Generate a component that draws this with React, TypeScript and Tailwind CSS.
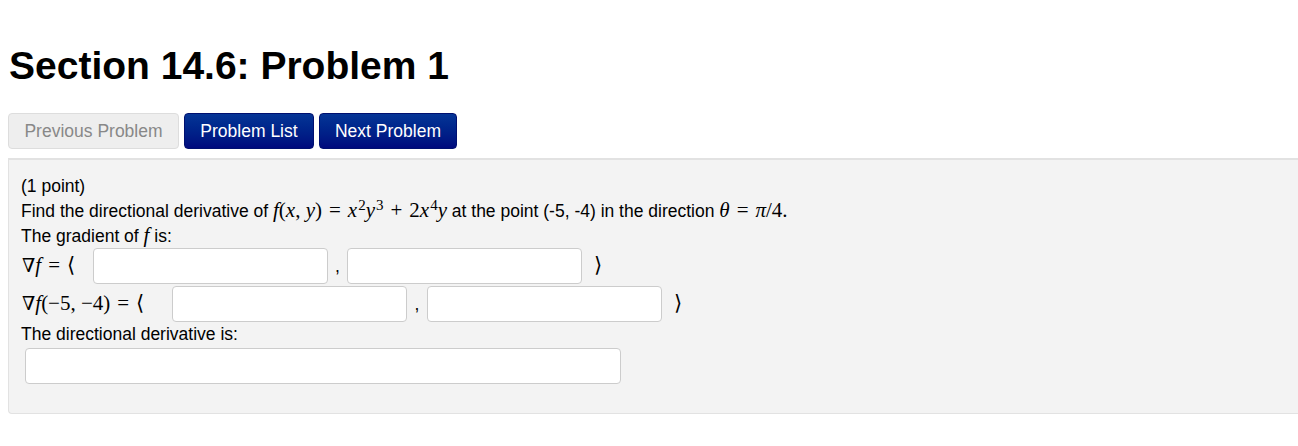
import React from "react";

const M = ({ children }: { children: React.ReactNode }) => (
  <span className="font-['Liberation_Serif',serif] text-[21px] leading-none italic">{children}</span>
);
const R = ({ children }: { children: React.ReactNode }) => (
  <span className="font-['Liberation_Serif',serif] text-[21px] leading-none not-italic">{children}</span>
);
const Sup = ({ children }: { children: React.ReactNode }) => (
  <sup className="ml-[1px] font-['Liberation_Serif',serif] text-[15px] leading-none">{children}</sup>
);
const Op = ({ children }: { children: React.ReactNode }) => (
  <span className="mx-[7px] font-['Liberation_Serif',serif] text-[21px] leading-none">{children}</span>
);
const Nabla = () => (
  <span className="font-['DejaVu_Serif',serif] text-[19px] leading-none">∇</span>
);

const Box = ({ w }: { w: string }) => (
  <input className={`${w} h-9 rounded border border-[#ccc] bg-white px-2 text-base outline-none`} />
);

export default function App() {
  return (
    <div className="min-h-[446px] bg-white font-['Liberation_Sans',Arial,sans-serif] text-black">
      <h1 className="px-[9px] pt-[44px] text-[39px] font-bold leading-[44px]">Section 14.6: Problem 1</h1>

      <div className="mt-[25px] flex gap-[5px] px-2">
        <button className="h-9 w-[171px] rounded border border-[#ddd] bg-[#eee] text-[17.5px] text-[#888]">
          Previous Problem
        </button>
        <button className="h-9 w-[130px] rounded border border-[#001070] bg-gradient-to-b from-[#063596] to-[#00097d] text-[17.5px] text-white">
          Problem List
        </button>
        <button className="h-9 w-[138px] rounded border border-[#001070] bg-gradient-to-b from-[#063596] to-[#00097d] text-[17.5px] text-white">
          Next Problem
        </button>
      </div>

      <div className="ml-2 mt-[9px] h-[256px] rounded-bl border-t-2 border-l border-b border-[#e2e2e2] bg-[#f3f3f3] pl-3 pt-[14px] text-[17.5px] leading-[25px]">
        <div>(1 point)</div>
        <div className="whitespace-nowrap">
          Find the directional derivative of{" "}
          <M>f</M>
          <R>(</R>
          <M>x</M>
          <R>,&nbsp;</R>
          <M>y</M>
          <R>)</R>
          <Op>=</Op>
          <M>x</M>
          <Sup>2</Sup>
          <M>y</M>
          <Sup>3</Sup>
          <Op>+</Op>
          <R>2</R>
          <M>x</M>
          <Sup>4</Sup>
          <M>y</M> at the point (-5, -4) in the direction <M>θ</M>
          <Op>=</Op>
          <M>π</M>
          <R>/4.</R>
        </div>
        <div>
          The gradient of <M>f</M> is:
        </div>

        <div className="mt-[-1px] flex items-center">
          <span className="ml-[1px] w-[71px] whitespace-nowrap">
            <Nabla />
            <M>f</M>
            <Op>=</Op>
            <R>⟨</R>
          </span>
          <Box w="w-[235px]" />
          <span className="w-[19px] text-center">,</span>
          <Box w="w-[235px]" />
          <span className="ml-3">
            <R>⟩</R>
          </span>
        </div>

        <div className="mt-[2px] flex items-center">
          <span className="ml-[1px] w-[150px] whitespace-nowrap">
            <Nabla />
            <M>f</M>
            <R>(−5,&nbsp;−4)</R>
            <Op>=</Op>
            <R>⟨</R>
          </span>
          <Box w="w-[235px]" />
          <span className="w-[20px] text-center">,</span>
          <Box w="w-[235px]" />
          <span className="ml-3">
            <R>⟩</R>
          </span>
        </div>

        <div>The directional derivative is:</div>
        <div className="ml-1 mt-[1px]">
          <Box w="w-[596px]" />
        </div>
      </div>

      <div className="ml-2 mt-[26px] text-[17px] font-bold">Note: You can earn partial credit on this problem.</div>
    </div>
  );
}
